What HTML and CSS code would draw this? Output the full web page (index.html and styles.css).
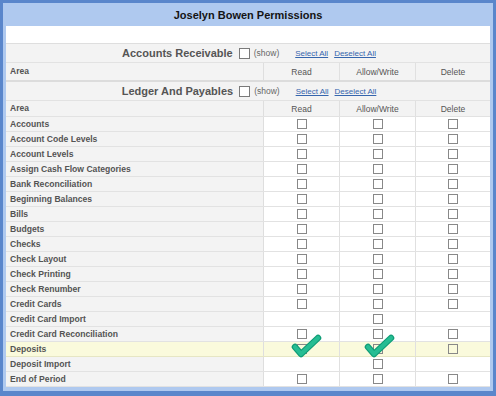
FILE: index.html
```html
<!DOCTYPE html>
<html lang="en">
<head>
    <meta charset="UTF-8">
    <title>Joselyn Bowen Permissions</title>
    <link rel="stylesheet" href="styles.css">
</head>
<body>
    <div class="window">
        <div class="title">Joselyn Bowen Permissions</div>
        <div class="sheet">
            <div class="blank"></div>

            <!-- Accounts Receivable -->
            <div class="section">
                <span class="section-name">Accounts Receivable</span>
                <span class="box box-lg"></span>
                <span class="show">(show)</span>
                <a class="link link-first" href="#">Select All</a>
                <a class="link" href="#">Deselect All</a>
            </div>
            <div class="row head head-first">
                <div class="area">Area</div>
                <div class="cell">Read</div>
                <div class="cell">Allow/Write</div>
                <div class="cell">Delete</div>
            </div>

            <!-- Ledger And Payables -->
            <div class="section">
                <span class="section-name">Ledger And Payables</span>
                <span class="box box-lg"></span>
                <span class="show">(show)</span>
                <a class="link link-first" href="#">Select All</a>
                <a class="link" href="#">Deselect All</a>
            </div>
            <div class="row head">
                <div class="area">Area</div>
                <div class="cell">Read</div>
                <div class="cell">Allow/Write</div>
                <div class="cell">Delete</div>
            </div>

            <div class="row"><div class="area">Accounts</div><div class="cell"><span class="box"></span></div><div class="cell"><span class="box"></span></div><div class="cell"><span class="box"></span></div></div>
            <div class="row"><div class="area">Account Code Levels</div><div class="cell"><span class="box"></span></div><div class="cell"><span class="box"></span></div><div class="cell"><span class="box"></span></div></div>
            <div class="row"><div class="area">Account Levels</div><div class="cell"><span class="box"></span></div><div class="cell"><span class="box"></span></div><div class="cell"><span class="box"></span></div></div>
            <div class="row"><div class="area">Assign Cash Flow Categories</div><div class="cell"><span class="box"></span></div><div class="cell"><span class="box"></span></div><div class="cell"><span class="box"></span></div></div>
            <div class="row"><div class="area">Bank Reconciliation</div><div class="cell"><span class="box"></span></div><div class="cell"><span class="box"></span></div><div class="cell"><span class="box"></span></div></div>
            <div class="row"><div class="area">Beginning Balances</div><div class="cell"><span class="box"></span></div><div class="cell"><span class="box"></span></div><div class="cell"><span class="box"></span></div></div>
            <div class="row"><div class="area">Bills</div><div class="cell"><span class="box"></span></div><div class="cell"><span class="box"></span></div><div class="cell"><span class="box"></span></div></div>
            <div class="row"><div class="area">Budgets</div><div class="cell"><span class="box"></span></div><div class="cell"><span class="box"></span></div><div class="cell"><span class="box"></span></div></div>
            <div class="row"><div class="area">Checks</div><div class="cell"><span class="box"></span></div><div class="cell"><span class="box"></span></div><div class="cell"><span class="box"></span></div></div>
            <div class="row"><div class="area">Check Layout</div><div class="cell"><span class="box"></span></div><div class="cell"><span class="box"></span></div><div class="cell"><span class="box"></span></div></div>
            <div class="row"><div class="area">Check Printing</div><div class="cell"><span class="box"></span></div><div class="cell"><span class="box"></span></div><div class="cell"><span class="box"></span></div></div>
            <div class="row"><div class="area">Check Renumber</div><div class="cell"><span class="box"></span></div><div class="cell"><span class="box"></span></div><div class="cell"><span class="box"></span></div></div>
            <div class="row"><div class="area">Credit Cards</div><div class="cell"><span class="box"></span></div><div class="cell"><span class="box"></span></div><div class="cell"><span class="box"></span></div></div>
            <div class="row"><div class="area">Credit Card Import</div><div class="cell"></div><div class="cell"><span class="box"></span></div><div class="cell"></div></div>
            <div class="row"><div class="area">Credit Card Reconciliation</div><div class="cell"><span class="box"></span></div><div class="cell"><span class="box"></span></div><div class="cell"><span class="box"></span></div></div>
            <div class="row selected">
                <div class="area">Deposits</div>
                <div class="cell">
                    <span class="box"></span>
                    <svg class="tick tick-read" width="32" height="26" viewBox="0 0 32 26">
                        <polyline points="4,13 10,20 27,4" class="tick-edge"/>
                        <polyline points="4,13 10,20 27,4" class="tick-fill"/>
                    </svg>
                </div>
                <div class="cell">
                    <span class="box"></span>
                    <svg class="tick tick-write" width="32" height="26" viewBox="0 0 32 26">
                        <polyline points="4,13 10,20 27,4" class="tick-edge"/>
                        <polyline points="4,13 10,20 27,4" class="tick-fill"/>
                    </svg>
                </div>
                <div class="cell"><span class="box"></span></div>
            </div>
            <div class="row"><div class="area">Deposit Import</div><div class="cell"></div><div class="cell"><span class="box"></span></div><div class="cell"></div></div>
            <div class="row"><div class="area">End of Period</div><div class="cell"><span class="box"></span></div><div class="cell"><span class="box"></span></div><div class="cell"><span class="box"></span></div></div>
            <!-- next row, scrolled out of view -->
            <div class="row"><div class="area"></div><div class="cell"><span class="box"></span></div><div class="cell"><span class="box"></span></div><div class="cell"><span class="box"></span></div></div>
        </div>
    </div>
</body>
</html>
```

FILE: styles.css
```css
body {
    margin: 0;
    font-family: "Liberation Sans", Arial, sans-serif;
    background: #ffffff;
}
.window {
    width: 496px;
    height: 396px;
    box-sizing: border-box;
    border: 3px solid #5a86cb;
    border-bottom-width: 5px;
    background-color: #afc9ef;
    padding: 0 3px 4px;
    display: flex;
    flex-direction: column;
}
.title {
    height: 23px;
    line-height: 24px;
    text-align: center;
    font-size: 11px;
    font-weight: bold;
    color: #141414;
}
.sheet {
    flex: 1;
    overflow: hidden;
    background-color: #ffffff;
}
.blank {
    height: 17px;
    border-bottom: 1px solid #dedede;
}

/* section rows */
.section {
    height: 18px;
    border-bottom: 1px solid #e2e2e2;
    background-color: #f3f3f3;
    display: flex;
    align-items: center;
    justify-content: center;
    padding-left: 2px;
}
.section-name {
    font-size: 11px;
    font-weight: bold;
    color: #555555;
}
.show {
    font-size: 8.5px;
    color: #666666;
    margin-left: 4px;
}
.link {
    font-size: 8px;
    color: #3565ad;
    text-decoration: underline;
    margin-left: 6px;
}
.link-first {
    margin-left: 16px;
}

/* grid rows */
.row {
    display: grid;
    grid-template-columns: 258px 76px 76px 74px;
    height: 15px;
    box-sizing: border-box;
    border-bottom: 1px solid #e2e2e2;
}
.area {
    background-color: #f3f3f3;
    border-right: 1px solid #dedede;
    padding-left: 4px;
    font-size: 8.6px;
    font-weight: bold;
    color: #545454;
    line-height: 14px;
    white-space: nowrap;
}
.cell {
    position: relative;
    border-right: 1px solid #e0e0e0;
    display: flex;
    align-items: center;
    justify-content: center;
}
.cell:last-child {
    border-right: none;
}
.head {
    height: 16px;
    background-color: #f3f3f3;
}
.head-first {
    height: 19px;
    border-bottom: 2px solid #dcdcdc;
}
.head .area {
    font-size: 8.5px;
    line-height: 15px;
    padding-left: 4px;
}
.head-first .area {
    line-height: 17px;
}
.head .cell {
    font-size: 8.5px;
    color: #555555;
}
.selected {
    background-color: #fafadc;
    border-bottom-color: #e6e6c4;
}
.selected .area {
    background-color: #fafadc;
}

/* checkboxes */
.box {
    display: inline-block;
    width: 10px;
    height: 10px;
    box-sizing: border-box;
    border: 1px solid #888888;
    background-color: #ffffff;
}
.selected .box {
    background-color: #fafadc;
}
.box-lg {
    width: 11px;
    height: 11px;
    border-color: #7a7a7a;
    margin-left: 6px;
}

/* green ticks drawn over the Deposits row */
.tick {
    position: absolute;
    top: -8px;
}
.tick-read {
    left: 27px;
}
.tick-write {
    left: 24px;
}
.tick-edge {
    fill: none;
    stroke: #0f9c76;
    stroke-width: 6.5;
    stroke-linecap: round;
    stroke-linejoin: round;
}
.tick-fill {
    fill: none;
    stroke: #26bd93;
    stroke-width: 4.2;
    stroke-linecap: round;
    stroke-linejoin: round;
}
```
